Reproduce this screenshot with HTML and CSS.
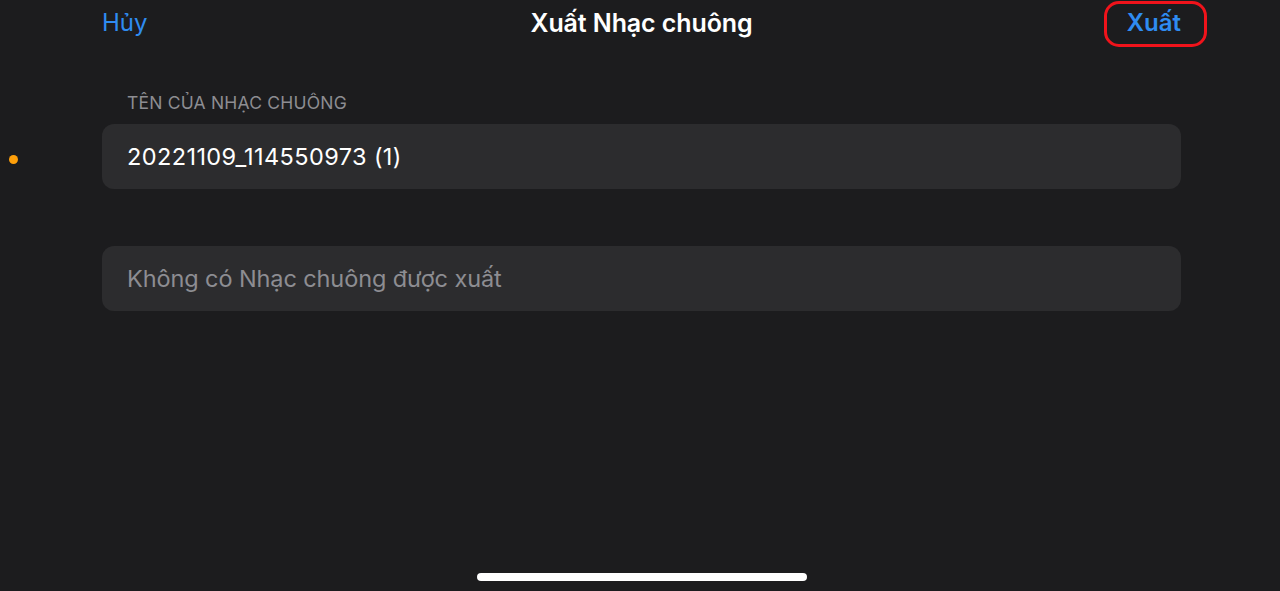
FILE: index.html
```html
<!DOCTYPE html>
<html lang="vi">
<head>
    <meta charset="utf-8">
    <title>Xuất Nhạc chuông</title>
    <link rel="stylesheet" href="styles.css">
</head>

<body>

<div class="screen">
	<div class="nav">
		<a href="javascript:;" class="cancel">Hủy</a>
		<h1>Xuất Nhạc chuông</h1>
		<a href="javascript:;" class="done mark">Xuất</a>
	</div>

	<div class="form">
		<p class="label">TÊN CỦA NHẠC CHUÔNG</p>
		<div class="field">20221109_114550973 (1)</div>
		<div class="field empty">Không có Nhạc chuông được xuất</div>
	</div>

	<span class="dot"></span>
	<span class="home"></span>
</div>

</body>
</html>
```

FILE: styles.css
```css
*{ margin:0; padding:0; box-sizing: border-box;}
a{ text-decoration: none;}

body{ background:#1c1c1e; font-family: Inter, "Noto Sans", sans-serif; color:#fff;}
.screen{ position: relative; width:1280px; height:591px; overflow: hidden;}

/* nav */
.nav{ display: grid; grid-template-columns: 1fr auto 1fr; align-items: center; height:46px; padding:0 99px 0 102px;}
.nav a{ font-size:24px; line-height:30px; color:#2f8cf1;}
.nav h1{ font-size:25px; line-height:30px; font-weight:600; letter-spacing:-0.1px;}
.nav .cancel{ justify-self: start;}
.nav .done{ position: relative; justify-self: end; font-weight:600;}
.mark:after{ content:""; position: absolute; left:-23px; right:-26px; top:-7px; bottom:-9px; border:3px solid #f0131b; border-radius:15px;}

/* form */
.form{ padding:46px 99px 0 102px;}
.label{ margin-bottom:10px; padding-left:25px; font-size:17.5px; line-height:22px; color:#8d8d92; letter-spacing:0.2px;}
.field{ height:65px; padding:0 25px; border-radius:12px; background:#2c2c2e; font-size:23.5px; font-weight:400; line-height:65px; color:#fff;}
.field:first-of-type{ letter-spacing:0.4px;}
.field.empty{ margin-top:57px; color:#8d8d92; letter-spacing:-0.1px;}

/* overlays */
.dot{ position: absolute; left:9px; top:155px; width:9px; height:9px; border-radius:50%; background:#fd9f0a;}
.home{ position: absolute; left:477px; top:573px; width:330px; height:8px; border-radius:4px; background:#fff;}
```
